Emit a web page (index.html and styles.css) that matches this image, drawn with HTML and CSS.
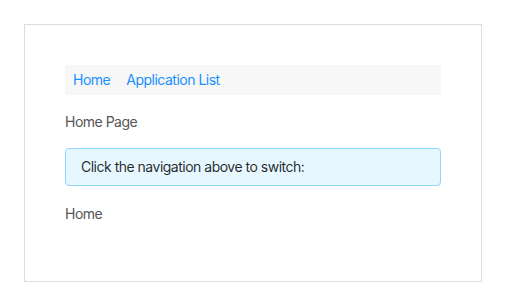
FILE: index.html
```html
<!DOCTYPE html>
<html lang="en">

<head>
    <meta charset="UTF-8">
    <meta name="viewport" content="width=device-width, initial-scale=1.0">
    <title>Home Page</title>
    <link rel="stylesheet" href="styles.css">
</head>

<body>
    <div class="container">
        <nav class="nav">
            <a href="#" class="nav-link">Home</a>
            <a href="#" class="nav-link">Application List</a>
        </nav>

        <p class="page-title">Home Page</p>

        <div class="alert">Click the navigation above to switch:</div>

        <p class="page-content">Home</p>
    </div>
</body>

</html>
```

FILE: styles.css
```css
body {
    font-family: Inter, 'Noto Sans', sans-serif;
    font-size: 14px;
    letter-spacing: -0.5px;
    background-color: #fff;
    margin: 0;
    padding: 24px;
    color: #555;
}

.container {
    border: 1px solid #ddd;
    padding: 40px;
    width: 376px;
}

.nav {
    display: flex;
    gap: 16px;
    align-items: center;
    height: 30px;
    padding: 0 8px;
    background-color: #f7f7f7;
}

.nav-link {
    color: #1890ff;
    text-decoration: none;
    line-height: 30px;
}

.page-title,
.page-content {
    margin: 16px 0;
    line-height: 22px;
}

.page-title {
    margin-bottom: 15px;
}

.page-content {
    margin-top: 17px;
}

.alert {
    padding: 8px 15px;
    line-height: 20px;
    background-color: #e6f7ff;
    border: 1px solid #91d5ff;
    border-radius: 4px;
    color: rgba(0, 0, 0, 0.85);
}
```
